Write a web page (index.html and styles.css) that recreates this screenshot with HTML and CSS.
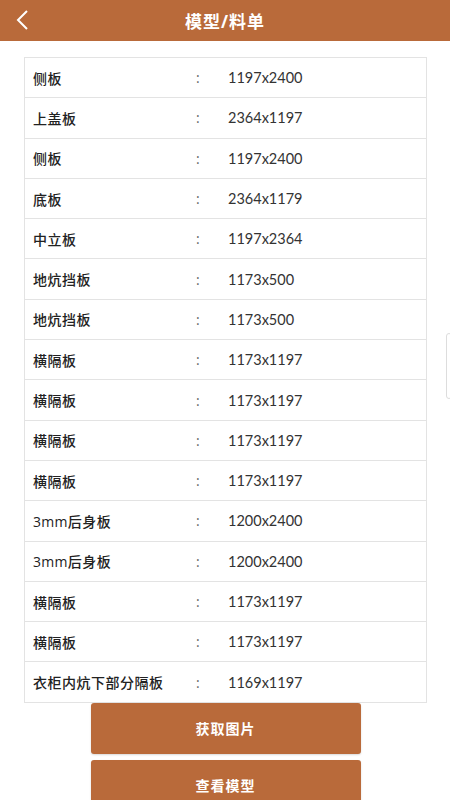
FILE: index.html
```html
<!DOCTYPE html>
<html lang="zh-CN">
<head>
  <meta charset="UTF-8" />
  <meta name="viewport" content="width=device-width, initial-scale=1.0"/>
  <title>模型/料单</title>
  <link rel="stylesheet" href="styles.css">
</head>
<body>

  <!-- Top Bar -->
  <div class="topbar">
    <a class="back" href="#">
      <svg width="14" height="22" viewBox="0 0 14 22"><path d="M12 2 L3 11 L12 20" fill="none" stroke="#fff" stroke-width="2"/></svg>
    </a>
    <h1>模型/料单</h1>
  </div>

  <!-- Parts List -->
  <div class="content">
    <div class="parts">
      <div class="row"><span class="name">侧板</span><span class="sep">:</span><span class="size">1197x2400</span></div>
      <div class="row"><span class="name">上盖板</span><span class="sep">:</span><span class="size">2364x1197</span></div>
      <div class="row"><span class="name">侧板</span><span class="sep">:</span><span class="size">1197x2400</span></div>
      <div class="row"><span class="name">底板</span><span class="sep">:</span><span class="size">2364x1179</span></div>
      <div class="row"><span class="name">中立板</span><span class="sep">:</span><span class="size">1197x2364</span></div>
      <div class="row"><span class="name">地炕挡板</span><span class="sep">:</span><span class="size">1173x500</span></div>
      <div class="row"><span class="name">地炕挡板</span><span class="sep">:</span><span class="size">1173x500</span></div>
      <div class="row"><span class="name">横隔板</span><span class="sep">:</span><span class="size">1173x1197</span></div>
      <div class="row"><span class="name">横隔板</span><span class="sep">:</span><span class="size">1173x1197</span></div>
      <div class="row"><span class="name">横隔板</span><span class="sep">:</span><span class="size">1173x1197</span></div>
      <div class="row"><span class="name">横隔板</span><span class="sep">:</span><span class="size">1173x1197</span></div>
      <div class="row"><span class="name"><span class="num">3mm</span>后身板</span><span class="sep">:</span><span class="size">1200x2400</span></div>
      <div class="row"><span class="name"><span class="num">3mm</span>后身板</span><span class="sep">:</span><span class="size">1200x2400</span></div>
      <div class="row"><span class="name">横隔板</span><span class="sep">:</span><span class="size">1173x1197</span></div>
      <div class="row"><span class="name">横隔板</span><span class="sep">:</span><span class="size">1173x1197</span></div>
      <div class="row"><span class="name">衣柜内炕下部分隔板</span><span class="sep">:</span><span class="size">1169x1197</span></div>
    </div>

    <div class="actions">
      <a class="btn" href="#">获取图片</a>
      <a class="btn" href="#">查看模型</a>
    </div>
  </div>

  <div class="scroll-hint"></div>

</body>
</html>
```

FILE: styles.css
```css
* {
  box-sizing: border-box;
}

body {
  margin: 0;
  font-family: 'Open Sans', 'Noto Sans CJK SC', sans-serif;
  background-color: #fff;
  color: #333;
  height: 800px;
  overflow: hidden;
}

.topbar {
  height: 41px;
  background-color: #b96a3a;
  display: flex;
  align-items: center;
  justify-content: center;
  position: relative;
}

.topbar h1 {
  margin: 0;
  color: #fff;
  font-size: 17px;
  font-weight: 700;
  letter-spacing: 1px;
}

.back {
  position: absolute;
  left: 15px;
  top: 9px;
  display: flex;
}

.content {
  padding: 16px 23px 0 24px;
}

.parts {
  border: 1px solid #e3e3e3;
}

.row {
  display: flex;
  align-items: center;
  height: 40.3px;
  border-top: 1px solid #e3e3e3;
  font-size: 14px;
}

.row:first-child {
  border-top: none;
  height: 39.3px;
}

.name {
  width: 171px;
  padding-left: 8px;
  font-family: 'Noto Sans CJK SC', sans-serif;
  font-weight: 500;
  color: #222;
  letter-spacing: 0.5px;
}

.name .num {
  font-family: 'Open Sans', sans-serif;
  font-weight: 400;
  letter-spacing: 0.3px;
}

.sep {
  width: 32px;
  color: #666;
}

.size {
  font-family: 'Lato', sans-serif;
  color: #333;
  font-size: 14.5px;
}

.actions {
  display: flex;
  flex-direction: column;
  align-items: center;
  gap: 6px;
}

.btn {
  width: 270px;
  height: 51px;
  background-color: #b96a3a;
  color: #fff;
  border-radius: 3px;
  display: flex;
  align-items: center;
  justify-content: center;
  text-decoration: none;
  font-size: 14px;
  font-weight: 700;
  letter-spacing: 1px;
  box-shadow: 0 1px 2px rgba(0, 0, 0, 0.15);
}

.scroll-hint {
  position: absolute;
  right: -2px;
  top: 333px;
  width: 6px;
  height: 66px;
  border: 1px solid #ddd;
  border-radius: 3px;
}
```
